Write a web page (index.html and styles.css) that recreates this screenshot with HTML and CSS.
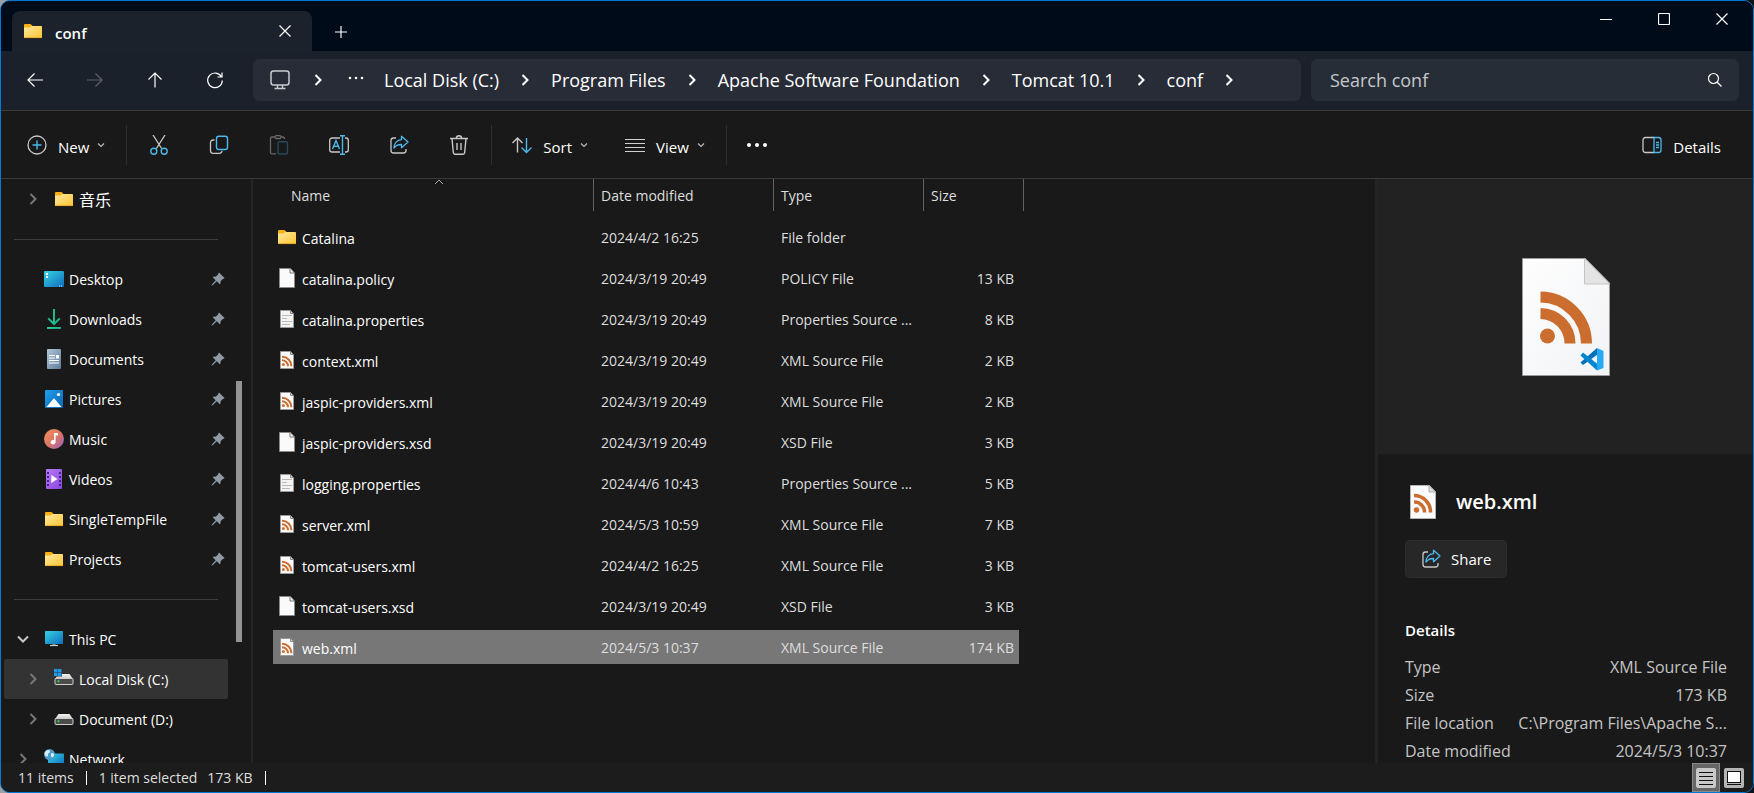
FILE: index.html
```html
<!DOCTYPE html>
<html lang="en">
<head>
<meta charset="UTF-8">
<title>conf</title>
<meta name="viewport" content="width=device-width, initial-scale=1">
<link rel="stylesheet" href="styles.css">
</head>
<body>

    <!-- Icon sprites -->
    <svg class="sprites" aria-hidden="true">
        <defs>
            <linearGradient id="g-folder" x1="0" y1="0" x2="1" y2="1"><stop offset="0" stop-color="#ffe9a2"/><stop offset="1" stop-color="#fdc430"/></linearGradient>
            <linearGradient id="g-screen" x1="0" y1="0" x2="1" y2="1"><stop offset="0" stop-color="#35d3e3"/><stop offset="1" stop-color="#0f6cbd"/></linearGradient>
            <linearGradient id="g-down" x1="0" y1="0" x2="1" y2="1"><stop offset="0" stop-color="#3fd684"/><stop offset="1" stop-color="#0d9c96"/></linearGradient>
            <linearGradient id="g-doc" x1="0" y1="0" x2="1" y2="1"><stop offset="0" stop-color="#b4c6d8"/><stop offset="1" stop-color="#5f7c9b"/></linearGradient>
            <linearGradient id="g-pic" x1="0" y1="0" x2="1" y2="1"><stop offset="0" stop-color="#1ea0e8"/><stop offset="1" stop-color="#0a64b8"/></linearGradient>
            <linearGradient id="g-music" x1="0" y1="0" x2="1" y2="1"><stop offset="0" stop-color="#f4915a"/><stop offset=".5" stop-color="#dd7766"/><stop offset="1" stop-color="#9b5cba"/></linearGradient>
            <linearGradient id="g-video" x1="0" y1="0" x2="1" y2="1"><stop offset="0" stop-color="#b67cf2"/><stop offset="1" stop-color="#8a45e0"/></linearGradient>
            <linearGradient id="g-page" x1="0" y1="0" x2="1" y2="1"><stop offset="0" stop-color="#fefefe"/><stop offset="1" stop-color="#f1f3f6"/></linearGradient>
            <linearGradient id="g-drive" x1="0" y1="0" x2="0" y2="1"><stop offset="0" stop-color="#f4f4f4"/><stop offset="1" stop-color="#c8c8c8"/></linearGradient>
        </defs>
        <symbol id="i-folder" viewBox="0 0 20 20">
            <path d="M1 4.500C1 3.600 1.400 3 2 3h5.400l2 1.800V8H1z" fill="#f9b115"/>
            <path d="M1 6.500h5.600L8.400 5H18c.6 0 1 .4 1 1v10.400c0 .4-.3.6-.6.6H1.600c-.3 0-.6-.2-.6-.6z" fill="url(#g-folder)"/>
            <path d="M1.200 16.600h17.600" stroke="#e0a21c" stroke-width=".8"/>
        </symbol>
        <symbol id="i-desktop" viewBox="0 0 20 20">
            <rect x="0" y="2" width="20" height="16" rx="1" fill="url(#g-screen)"/>
            <path d="M2 4h2v2H2zM2 7h2v2H2z" fill="#fff"/>
            <path d="M15 17h1M17 17h1" stroke="#cfe8ff"/>
        </symbol>
        <symbol id="i-downloads" viewBox="0 0 20 20">
            <path d="M10 0v14M4.200 9.400L10 15l5.800-5.600" fill="none" stroke="#20b98c" stroke-width="2"/>
            <rect x="3" y="18" width="14" height="2" fill="url(#g-down)"/>
        </symbol>
        <symbol id="i-documents" viewBox="0 0 20 20">
            <rect x="3" y="0" width="14" height="20" rx="1" fill="url(#g-doc)"/>
            <path d="M5 6.500h6M5 9h6M5 11.500h10M5 14h10" stroke="#fff" stroke-width="1.200"/>
            <rect x="12" y="6" width="3" height="3.500" fill="#fff"/>
        </symbol>
        <symbol id="i-pictures" viewBox="0 0 20 20">
            <rect x="1" y="1" width="18" height="18" rx="1" fill="url(#g-pic)"/>
            <path d="M2.500 18l7-8.200c.3-.3.700-.3 1 0l7 8.200z" fill="#fff"/>
            <circle cx="14.500" cy="5.500" r="1.600" fill="#fff"/>
        </symbol>
        <symbol id="i-music" viewBox="0 0 20 20">
            <circle cx="10" cy="10" r="10" fill="url(#g-music)"/>
            <circle cx="9" cy="13.300" r="2.300" fill="#fff"/>
            <path d="M10 4h4v2.500h-2.400v7H10z" fill="#fff"/>
        </symbol>
        <symbol id="i-videos" viewBox="0 0 20 20">
            <rect x="2" y="0" width="16" height="20" rx="1" fill="url(#g-video)"/>
            <path d="M3 3h2v2H3zM3 7h2v2H3zM3 11h2v2H3zM3 15h2v2H3zM15 3h2v2h-2zM15 7h2v2h-2zM15 11h2v2h-2zM15 15h2v2h-2z" fill="#4b2182"/>
            <path d="M7.300 6v8l6.200-4z" fill="#fff"/>
        </symbol>
        <symbol id="i-pc" viewBox="0 0 20 20">
            <rect x="1" y="2" width="18" height="13" rx=".8" fill="url(#g-screen)"/>
            <path d="M8.500 15h3v1.500h-3z" fill="#7d8a96"/>
            <path d="M6 16.500h8" stroke="#c9d1d8" stroke-width="1.200"/>
        </symbol>
        <symbol id="i-drive" viewBox="0 0 20 20">
            <path d="M4.500 5h11L19 10H1z" fill="url(#g-drive)"/>
            <rect x="1" y="9.500" width="18" height="6" rx="1" fill="#4c4c4c" stroke="#cfcfcf" stroke-width="1"/>
            <circle cx="4.500" cy="12.200" r="1" fill="#3ee04a"/>
        </symbol>
        <symbol id="i-windrive" viewBox="0 0 20 20">
            <use href="#i-drive"/>
            <path d="M0 0h8v7.500H0z" fill="#333"/>
            <path d="M0 0h3.500v3.300H0zM4 0h3.500v3.300H4zM0 3.800h3.500v3.300H0zM4 3.800h3.500v3.300H4z" fill="#1c9cee"/>
        </symbol>
        <symbol id="i-network" viewBox="0 0 20 20">
            <rect x="4" y="4.500" width="16" height="12" rx=".8" fill="url(#g-screen)"/>
            <circle cx="5.500" cy="5.500" r="5.500" fill="#4c9fca"/>
            <path d="M2 2c2-2 4-1 4 .5S3.500 4 4 6s-2 2-3 0 0-3 1-4zM8 4c1.500 0 2.500 1 2 2.500S8 9 7.500 8s-1-4 .5-4z" fill="#d6edf8"/>
        </symbol>
        <symbol id="i-page" viewBox="0 0 20 20">
            <path d="M2.500.5h11L17.500 5v14.500h-15z" fill="#fafafa" stroke="#8a8a8a"/>
            <path d="M13 .5V5h4.500" fill="none" stroke="#777"/>
        </symbol>
        <symbol id="i-text" viewBox="0 0 20 20">
            <path d="M3.500 1.500h10L16.500 5v13.500h-13z" fill="#f4f4f4" stroke="#9a9a9a"/>
            <path d="M13.500 1.500V4.500h3" fill="none" stroke="#888"/>
            <path d="M5 6.500h10M5 9.500h5M5 12.500h10M5 15.500h8" stroke="#b9b9b9"/>
        </symbol>
        <symbol id="i-xml" viewBox="0 0 20 20">
            <path d="M3.500 1.500h10L16.500 5v13.500h-13z" fill="#fbfbfb" stroke="#9a9a9a"/>
            <path d="M13.500 1.500V4.500h3" fill="none" stroke="#888"/>
            <circle cx="6.400" cy="14.600" r="1.500" fill="#cb6d2e"/>
            <path d="M5 10.200a6 6 0 0 1 6 6M5 6.800a9.400 9.400 0 0 1 9.400 9.400" fill="none" stroke="#cb6d2e" stroke-width="2"/>
        </symbol>
        <symbol id="i-pin" viewBox="0 0 14 14">
            <path d="M8.300.8l5 5c.3.300.1.700-.2.800l-1.300.3-2.200 2.300-.2 2.500c0 .4-.5.6-.8.300L5.800 9.300 1.600 13.300l-1.100.3.300-1.200 3.900-4.200L2 5.600c-.3-.3-.1-.8.300-.8l2.700-.3 2.200-2.200.3-1.300c.1-.4.500-.5.800-.2z" fill="#8d9aa3"/>
        </symbol>
        <symbol id="i-right" viewBox="0 0 20 20"><path d="M7.500 5l5 5-5 5" fill="none" stroke="currentColor" stroke-width="2"/></symbol>
        <symbol id="i-open" viewBox="0 0 20 20"><path d="M5 7.500l5 5 5-5" fill="none" stroke="currentColor" stroke-width="2"/></symbol>
        <symbol id="i-small" viewBox="0 0 10 10"><path d="M2 3.500l3 3 3-3" fill="none" stroke="#b8b8b8" stroke-width="1.200"/></symbol>
        <symbol id="i-close" viewBox="0 0 12 12"><path d="M.500.500l11 11M11.500.500l-11 11" fill="none" stroke="currentColor" stroke-width="1.200"/></symbol>
        <symbol id="i-share" viewBox="0 0 20 20">
            <path d="M7 3H4.500A2.500 2.500 0 0 0 2 5.500v10A2.500 2.500 0 0 0 4.500 18h10a2.500 2.500 0 0 0 2.500-2.500V14" fill="none" stroke="#c8c8c8" stroke-width="1.300"/>
            <path d="M12.500 1.200L19 7l-6.500 5.800V9.500C9 9.300 7 10.300 5 13c.2-4.500 3-8 7.500-8.300z" fill="none" stroke="#4cb8ee" stroke-width="1.300" stroke-linejoin="round"/>
        </symbol>
    </svg>

    <div class="window">
        <header class="titlebar">
            <div class="tab">
                <svg class="icon"><use href="#i-folder"/></svg>
                <span class="tab-title">conf</span>
                <button class="tab-close" aria-label="Close tab"><svg class="icon-xs"><use href="#i-close"/></svg></button>
            </div>
            <button class="new-tab" aria-label="New tab"><svg class="icon-xs" viewBox="0 0 12 12"><path d="M6 0v12M0 6h12" stroke="currentColor" stroke-width="1.200"/></svg></button>
            <div class="window-buttons">
                <button aria-label="Minimize"><svg class="icon-xs" viewBox="0 0 12 12"><path d="M0 6.500h12" stroke="currentColor"/></svg></button>
                <button aria-label="Maximize"><svg class="icon-xs" viewBox="0 0 12 12"><rect x=".5" y=".5" width="11" height="11" rx="1" fill="none" stroke="currentColor" stroke-width="1.200"/></svg></button>
                <button aria-label="Close"><svg class="icon-xs"><use href="#i-close"/></svg></button>
            </div>
        </header>

        <nav class="navbar" aria-label="Navigation">
            <button aria-label="Back"><svg class="icon" viewBox="0 0 20 20"><path d="M18 10H3M9.500 3.500L3 10l6.500 6.500" fill="none" stroke="currentColor" stroke-width="1.200"/></svg></button>
            <button aria-label="Forward" disabled><svg class="icon" viewBox="0 0 20 20"><path d="M2 10h15M10.500 3.500L17 10l-6.500 6.500" fill="none" stroke="currentColor" stroke-width="1.200"/></svg></button>
            <button aria-label="Up"><svg class="icon" viewBox="0 0 20 20"><path d="M10 17.500V3M3.500 9.500L10 3l6.500 6.500" fill="none" stroke="currentColor" stroke-width="1.200"/></svg></button>
            <button aria-label="Refresh"><svg class="icon" viewBox="0 0 20 20"><path d="M16.500 7A7.300 7.300 0 1 0 17.300 10.500M17 2.500V7h-4.500" fill="none" stroke="currentColor" stroke-width="1.200"/></svg></button>
            <div class="address">
                <button aria-label="Computer"><svg class="icon" viewBox="0 0 20 20"><rect x="1" y="1" width="18" height="14" rx="2.500" fill="none" stroke="#c8cbd0" stroke-width="1.500"/><path d="M7.500 15v3M12.500 15v3M4.500 18.500h11" stroke="#c8cbd0" stroke-width="1.500"/></svg></button>
                <svg class="icon"><use href="#i-right"/></svg>
                <button aria-label="More"><svg class="icon" viewBox="0 0 20 20"><g fill="#fff"><circle cx="4" cy="8" r="1.300"/><circle cx="10" cy="8" r="1.300"/><circle cx="16" cy="8" r="1.300"/></g></svg></button>
                <a href="#">Local Disk (C:)</a>
                <svg class="icon"><use href="#i-right"/></svg>
                <a href="#">Program Files</a>
                <svg class="icon"><use href="#i-right"/></svg>
                <a href="#">Apache Software Foundation</a>
                <svg class="icon"><use href="#i-right"/></svg>
                <a href="#">Tomcat 10.1</a>
                <svg class="icon"><use href="#i-right"/></svg>
                <a href="#">conf</a>
                <svg class="icon"><use href="#i-right"/></svg>
            </div>
            <div class="search">
                <input type="text" placeholder="Search conf" aria-label="Search conf">
                <svg class="icon-s" viewBox="0 0 16 16"><circle cx="6.500" cy="6.500" r="5" fill="none" stroke="currentColor" stroke-width="1.200"/><path d="M10 10l4.500 4.500" stroke="currentColor" stroke-width="1.300"/></svg>
            </div>
        </nav>

        <div class="toolbar">
            <button class="tool">
                <svg class="icon" viewBox="0 0 20 20"><circle cx="10" cy="10" r="9" fill="none" stroke="#c8c8c8" stroke-width="1.300"/><path d="M10 5.500v9M5.500 10h9" stroke="#4cb8ee" stroke-width="1.400"/></svg>
                <span>New</span>
                <svg class="arrow"><use href="#i-small"/></svg>
            </button>
            <span class="separator"></span>
            <button class="tool tool-icon" aria-label="Cut"><svg class="icon" viewBox="0 0 20 20"><path d="M4 0l8.600 13.500M16 0L7.400 13.500" stroke="#c8c8c8" stroke-width="1.300"/><g fill="none" stroke="#4cb8ee" stroke-width="1.400"><circle cx="4.800" cy="16.300" r="3"/><circle cx="15.200" cy="16.300" r="3"/></g></svg></button>
            <button class="tool tool-icon" aria-label="Copy"><svg class="icon" viewBox="0 0 20 20"><path d="M5.500 5H4a2.500 2.500 0 0 0-2.500 2.500v8.300A2.500 2.500 0 0 0 4 18.300h6.500a2.500 2.500 0 0 0 2.500-2.500" fill="none" stroke="#c8c8c8" stroke-width="1.300"/><rect x="7.500" y="1.200" width="11" height="13.300" rx="2.300" fill="none" stroke="#4cb8ee" stroke-width="1.400"/></svg></button>
            <button class="tool tool-icon" aria-label="Paste" disabled><svg class="icon" viewBox="0 0 20 20"><path d="M7 18.800H3A1.500 1.500 0 0 1 1.500 17.300V3.500A1.500 1.500 0 0 1 3 2h3M12 2h2a1.500 1.500 0 0 1 1.500 1.500V4" fill="none" stroke="#686868" stroke-width="1.300"/><rect x="6" y=".7" width="6" height="2.800" rx="1.300" fill="none" stroke="#686868" stroke-width="1.300"/><rect x="9" y="6.700" width="9.500" height="12.300" rx="1.500" fill="none" stroke="#27495a" stroke-width="1.400"/></svg></button>
            <button class="tool tool-icon" aria-label="Rename"><svg class="icon" viewBox="0 0 20 20"><path d="M11 3H3A2.300 2.300 0 0 0 .7 5.300v9.400A2.300 2.300 0 0 0 3 17h8M16 3h1a2.300 2.300 0 0 1 2.300 2.300v9.400A2.300 2.300 0 0 1 17 17h-1" fill="none" stroke="#c8c8c8" stroke-width="1.300"/><path d="M3.500 14L7 5.500l3.500 8.500M4.700 11.200h4.600M13.500.5v19M11 .7h5M11 19.300h5" fill="none" stroke="#4cb8ee" stroke-width="1.400"/></svg></button>
            <button class="tool tool-icon" aria-label="Share"><svg class="icon"><use href="#i-share"/></svg></button>
            <button class="tool tool-icon" aria-label="Delete"><svg class="icon" viewBox="0 0 20 20"><path d="M1 3.500h18M3 3.500l1.300 14c.1 1 .8 1.700 1.700 1.700h8c.9 0 1.600-.7 1.700-1.700l1.300-14M7.300 3.200C7.500 0 12.500 0 12.700 3.200M8 8v7M12 8v7" fill="none" stroke="#c8c8c8" stroke-width="1.400"/></svg></button>
            <span class="separator"></span>
            <button class="tool">
                <svg class="icon" viewBox="0 0 20 20"><path d="M5.500 17.500V3M.5 8l5-5 5 5" fill="none" stroke="#c8c8c8" stroke-width="1.400"/><path d="M14.500 3v14.500M9.500 12.500l5 5 5-5" fill="none" stroke="#4cb8ee" stroke-width="1.400"/></svg>
                <span>Sort</span>
                <svg class="arrow"><use href="#i-small"/></svg>
            </button>
            <button class="tool">
                <svg class="icon" viewBox="0 0 20 20"><path d="M0 4.500h20M0 8.500h20M0 12.500h20M0 16.500h20" stroke="#d0d0d0" stroke-width="1.200"/></svg>
                <span>View</span>
                <svg class="arrow"><use href="#i-small"/></svg>
            </button>
            <span class="separator"></span>
            <button class="tool" aria-label="See more"><svg class="icon" viewBox="0 0 20 20"><g fill="#fff"><circle cx="2" cy="10" r="2"/><circle cx="10" cy="10" r="2"/><circle cx="18" cy="10" r="2"/></g></svg></button>
            <button class="tool details-toggle">
                <svg class="icon" viewBox="0 0 20 20"><path d="M12 2.500H3.500A2.500 2.500 0 0 0 1 5v10a2.500 2.500 0 0 0 2.500 2.500H12" fill="none" stroke="#c8c8c8" stroke-width="1.300"/><path d="M12 2.500h4.500A2.500 2.500 0 0 1 19 5v10a2.500 2.500 0 0 1-2.500 2.500H12zM14 7.500h3M14 10h3M14 12.500h3" fill="none" stroke="#4cb8ee" stroke-width="1.300"/></svg>
                <span>Details</span>
            </button>
        </div>

        <main class="content">
            <aside class="sidebar">
                <a class="place child" href="#"><svg class="icon twist"><use href="#i-right"/></svg><svg class="icon"><use href="#i-folder"/></svg><span class="cjk" lang="zh">音乐</span></a>
                <hr>
                <a class="place" href="#"><svg class="icon"><use href="#i-desktop"/></svg><span>Desktop</span><svg class="pin"><use href="#i-pin"/></svg></a>
                <a class="place" href="#"><svg class="icon"><use href="#i-downloads"/></svg><span>Downloads</span><svg class="pin"><use href="#i-pin"/></svg></a>
                <a class="place" href="#"><svg class="icon"><use href="#i-documents"/></svg><span>Documents</span><svg class="pin"><use href="#i-pin"/></svg></a>
                <a class="place" href="#"><svg class="icon"><use href="#i-pictures"/></svg><span>Pictures</span><svg class="pin"><use href="#i-pin"/></svg></a>
                <a class="place" href="#"><svg class="icon"><use href="#i-music"/></svg><span>Music</span><svg class="pin"><use href="#i-pin"/></svg></a>
                <a class="place" href="#"><svg class="icon"><use href="#i-videos"/></svg><span>Videos</span><svg class="pin"><use href="#i-pin"/></svg></a>
                <a class="place" href="#"><svg class="icon"><use href="#i-folder"/></svg><span>SingleTempFile</span><svg class="pin"><use href="#i-pin"/></svg></a>
                <a class="place" href="#"><svg class="icon"><use href="#i-folder"/></svg><span>Projects</span><svg class="pin"><use href="#i-pin"/></svg></a>
                <hr>
                <a class="place root open" href="#"><svg class="icon twist"><use href="#i-open"/></svg><svg class="icon"><use href="#i-pc"/></svg><span>This PC</span></a>
                <a class="place child active" href="#"><svg class="icon twist"><use href="#i-right"/></svg><svg class="icon"><use href="#i-windrive"/></svg><span>Local Disk (C:)</span></a>
                <a class="place child" href="#"><svg class="icon twist"><use href="#i-right"/></svg><svg class="icon"><use href="#i-drive"/></svg><span>Document (D:)</span></a>
                <a class="place root" href="#"><svg class="icon twist"><use href="#i-right"/></svg><svg class="icon"><use href="#i-network"/></svg><span>Network</span></a>
                <div class="scrollbar"></div>
            </aside>

            <section class="files">
                <table>
                    <colgroup><col class="col-name"><col class="col-date"><col class="col-type"><col class="col-size"></colgroup>
                    <thead>
                        <tr>
                            <th aria-sort="ascending"><button>Name</button><svg class="sort-mark" viewBox="0 0 10 6"><path d="M1 5l4-4 4 4" fill="none" stroke="#aaa"/></svg></th>
                            <th><button>Date modified</button></th>
                            <th><button>Type</button></th>
                            <th><button>Size</button></th>
                        </tr>
                    </thead>
                    <tbody>
                        <tr><td><svg class="icon"><use href="#i-folder"/></svg>Catalina</td><td>2024/4/2 16:25</td><td>File folder</td><td></td></tr>
                        <tr><td><svg class="icon"><use href="#i-page"/></svg>catalina.policy</td><td>2024/3/19 20:49</td><td>POLICY File</td><td>13 KB</td></tr>
                        <tr><td><svg class="icon"><use href="#i-text"/></svg>catalina.properties</td><td>2024/3/19 20:49</td><td>Properties Source ...</td><td>8 KB</td></tr>
                        <tr><td><svg class="icon"><use href="#i-xml"/></svg>context.xml</td><td>2024/3/19 20:49</td><td>XML Source File</td><td>2 KB</td></tr>
                        <tr><td><svg class="icon"><use href="#i-xml"/></svg>jaspic-providers.xml</td><td>2024/3/19 20:49</td><td>XML Source File</td><td>2 KB</td></tr>
                        <tr><td><svg class="icon"><use href="#i-page"/></svg>jaspic-providers.xsd</td><td>2024/3/19 20:49</td><td>XSD File</td><td>3 KB</td></tr>
                        <tr><td><svg class="icon"><use href="#i-text"/></svg>logging.properties</td><td>2024/4/6 10:43</td><td>Properties Source ...</td><td>5 KB</td></tr>
                        <tr><td><svg class="icon"><use href="#i-xml"/></svg>server.xml</td><td>2024/5/3 10:59</td><td>XML Source File</td><td>7 KB</td></tr>
                        <tr><td><svg class="icon"><use href="#i-xml"/></svg>tomcat-users.xml</td><td>2024/4/2 16:25</td><td>XML Source File</td><td>3 KB</td></tr>
                        <tr><td><svg class="icon"><use href="#i-page"/></svg>tomcat-users.xsd</td><td>2024/3/19 20:49</td><td>XSD File</td><td>3 KB</td></tr>
                        <tr class="selected"><td><svg class="icon"><use href="#i-xml"/></svg>web.xml</td><td>2024/5/3 10:37</td><td>XML Source File</td><td>174 KB</td></tr>
                    </tbody>
                </table>
            </section>

            <aside class="details">
                <div class="preview">
                    <svg class="preview-icon" viewBox="0 0 88 118">
                        <path d="M.5.5h63L87.500 25v92.500H.5z" fill="url(#g-page)" stroke="#9a9a9a"/>
                        <path d="M62.500.5V26h25z" fill="#e4e4e4" stroke="#c4c4c4"/>
                        <circle cx="25.500" cy="78" r="7.500" fill="#cb6d2e"/>
                        <path d="M18.500 55.500a30 30 0 0 1 29.500 30M18.500 39a46.500 46.500 0 0 1 46 46.500" fill="none" stroke="#cb6d2e" stroke-width="11"/>
                        <path d="M75 90L58.500 104.500l2.500 2.500 14.500-10.500z" fill="#0070b8"/>
                        <path d="M75 112.500L58.500 97.500l2.500-3 14.500 11.500z" fill="#0085d0"/>
                        <path d="M75 90l6.500 3v17l-6.500 2.500z" fill="#27a9f5"/>
                    </svg>
                </div>
                <div class="info">
                    <div class="file-title">
                        <svg class="title-icon" viewBox="0 0 26 34">
                            <path d="M.5.500h19L25.500 7v26.500H.5z" fill="#fbfbfb" stroke="#b4b4b4"/>
                            <path d="M19 .5V7h6.500z" fill="#ddd" stroke="#aaa"/>
                            <circle cx="6.500" cy="25" r="2.700" fill="#cb6d2e"/>
                            <path d="M4 17a10 10 0 0 1 10.500 10.500M4 10.500A16.500 16.500 0 0 1 20.500 27.500" fill="none" stroke="#cb6d2e" stroke-width="3.500"/>
                        </svg>
                        <h1>web.xml</h1>
                    </div>
                    <button class="share"><svg class="icon"><use href="#i-share"/></svg><span>Share</span></button>
                    <h2>Details</h2>
                    <dl>
                        <div><dt>Type</dt><dd>XML Source File</dd></div>
                        <div><dt>Size</dt><dd>173 KB</dd></div>
                        <div><dt>File location</dt><dd>C:\Program Files\Apache S...</dd></div>
                        <div><dt>Date modified</dt><dd>2024/5/3 10:37</dd></div>
                    </dl>
                </div>
            </aside>
        </main>

        <footer class="statusbar">
            <span>11 items</span>
            <i></i>
            <span>1 item selected</span>
            <span class="size">173 KB</span>
            <i></i>
            <div class="view-buttons">
                <button class="on" aria-label="Details view"><svg class="icon" viewBox="0 0 20 20"><rect width="20" height="20" rx="2" fill="#c8c8c8"/><path d="M3 4.500h14M3 8.500h14M3 12.500h14M3 16.500h14" stroke="#111"/></svg></button>
                <button aria-label="Large icons"><svg class="icon" viewBox="0 0 20 20"><rect width="20" height="20" rx="2" fill="#b4b4b4"/><rect x="3.500" y="3.500" width="13" height="11" fill="#fff" stroke="#111"/><path d="M3 16.500h14" stroke="#111"/></svg></button>
            </div>
        </footer>
    </div>

</body>
</html>
```

FILE: styles.css
```css
* {
    box-sizing: border-box;
}

body {
    margin: 0;
    background: linear-gradient(90deg, #9aa0a6, #101010 50%);
    color: #fff;
    font-family: 'Open Sans', 'Noto Sans', 'Noto Sans CJK SC', sans-serif;
    font-size: 14px;
    line-height: 20px;
    overflow: hidden;
}

button {
    padding: 0;
    border: none;
    background: none;
    color: inherit;
    font: inherit;
    display: flex;
    align-items: center;
    justify-content: center;
}

a {
    color: inherit;
    text-decoration: none;
}

svg {
    display: block;
    flex: none;
}

.sprites {
    position: absolute;
    width: 0;
    height: 0;
}

.icon {
    width: 20px;
    height: 20px;
}

.icon-s {
    width: 16px;
    height: 16px;
}

.icon-xs {
    width: 12px;
    height: 12px;
}

.window {
    display: flex;
    flex-direction: column;
    height: 100vh;
    border: 1px solid #0078d4;
    border-radius: 10px;
    background-color: #191919;
    overflow: hidden;
}

/* Title bar */
.titlebar {
    display: flex;
    height: 50px;
    background-color: #000b1a;
}

.tab {
    display: flex;
    align-items: center;
    gap: 12px;
    width: 300px;
    margin: 10px 0 0 11px;
    padding: 0 17px 0 11px;
    border-radius: 8px 8px 0 0;
    background-color: #1c222c;
}

.tab-title {
    padding-top: 3px;
    font-size: 15px;
    font-weight: 600;
}

.tab-close {
    width: 20px;
    height: 20px;
    margin-left: auto;
}

.new-tab {
    width: 58px;
    padding-top: 12px;
}

.window-buttons {
    display: flex;
    height: 36px;
    margin: 0 2px 0 auto;
}

.window-buttons button {
    width: 58px;
}

/* Navigation row */
.navbar {
    display: flex;
    align-items: center;
    height: 60px;
    padding: 0 14px 2px;
    border-bottom: 1px solid #3a3a3a;
    background-color: #1b212b;
}

.navbar > button {
    width: 40px;
    height: 40px;
    margin-right: 20px;
}

.navbar > button:disabled {
    color: #5d626b;
}

.address {
    display: flex;
    flex: 1;
    align-items: center;
    gap: 16px;
    height: 42px;
    margin: 0 10px 0 -2px;
    padding-left: 15px;
    border-radius: 6px;
    background-color: #282c37;
    font-size: 18px;
    line-height: 24px;
    white-space: nowrap;
    overflow: hidden;
}

.address button {
    width: 24px;
}

.search {
    display: flex;
    align-items: center;
    width: 428px;
    height: 42px;
    padding: 0 16px 0 19px;
    border-radius: 6px;
    background-color: #272d36;
}

.search input {
    flex: 1;
    min-width: 0;
    padding: 0;
    border: none;
    outline: none;
    background: none;
    color: #fff;
    font: inherit;
    font-size: 18px;
}

.search input::placeholder {
    color: #c5c8cc;
}

/* Toolbar */
.toolbar {
    display: flex;
    align-items: center;
    height: 68px;
    padding: 0 16px 0 8px;
    border-bottom: 1px solid #3a3a3a;
    font-size: 15px;
}

.tool {
    height: 40px;
    padding: 0 18px;
}

.tool span {
    margin: 4px 7px 0 11px;
}

.tool-icon {
    width: 60px;
}

.arrow {
    width: 10px;
    height: 10px;
}

.separator {
    width: 1px;
    height: 40px;
    margin: 0 2px;
    background-color: #2e2e2e;
}

.details-toggle {
    margin-left: auto;
    padding-right: 9px;
}

/* Main area */
.content {
    display: flex;
    flex: 1;
    min-height: 0;
}

.sidebar {
    position: relative;
    width: 252px;
    border-right: 2px solid #262626;
    overflow: hidden;
}

.sidebar hr {
    height: 1px;
    margin: 20px 33px 19px 13px;
    border: none;
    background-color: #3c3c3c;
}

.place {
    display: flex;
    align-items: center;
    gap: 5px;
    height: 40px;
    margin: 0 23px 0 3px;
    padding-left: 40px;
    border-radius: 2px;
}

.place span {
    padding-top: 2px;
}

.place.root {
    padding-left: 9px;
}

.place.child {
    padding-left: 19px;
}

.place.active {
    background-color: #333;
}

.twist {
    color: #777;
    margin-right: 6px;
}

.open .twist {
    color: #c8c8c8;
}

.cjk {
    font-size: 16px;
}

.pin {
    width: 14px;
    height: 14px;
    margin: 0 3px 0 auto;
}

.scrollbar {
    position: absolute;
    top: 202px;
    right: 9px;
    width: 6px;
    height: 261px;
    background-color: #949494;
}

/* File list */
.files {
    flex: 1;
    min-width: 0;
    padding-left: 20px;
    overflow: hidden;
}

table {
    width: 751px;
    table-layout: fixed;
    border-spacing: 0;
    white-space: nowrap;
}

.col-name {
    width: 321px;
}

.col-date {
    width: 180px;
}

.col-type {
    width: 150px;
}

.col-size {
    width: 100px;
}

th {
    position: relative;
    padding: 0 0 6px;
    color: #dedede;
    font-weight: 400;
}

th button {
    width: 100%;
    height: 32px;
    padding: 2px 0 0 7px;
    border-right: 1px solid #636363;
    justify-content: flex-start;
}

th:first-child button {
    padding-left: 18px;
}

.sort-mark {
    position: absolute;
    top: 0;
    left: 50%;
    width: 10px;
    height: 6px;
}

td {
    height: 41px;
    padding: 1px 0 0 7px;
    border-top: 3px solid transparent;
    border-bottom: 4px solid transparent;
    background-clip: padding-box;
    color: #dedede;
}

td:first-child {
    padding-left: 4px;
    color: #fff;
}

td:last-child {
    padding-right: 5px;
    border-right: 5px solid transparent;
    text-align: right;
}

td .icon {
    display: inline-block;
    margin-right: 5px;
    vertical-align: -3px;
}

.selected td {
    background-color: #777;
}

/* Details pane */
.details {
    width: 378px;
    border-left: 3px solid #242424;
    font-size: 15px;
}

.preview {
    display: flex;
    align-items: center;
    justify-content: center;
    height: 275px;
    background-color: #222;
}

.preview-icon {
    width: 88px;
    height: 118px;
}

.info {
    padding: 31px 26px 0 27px;
}

.file-title {
    display: flex;
    align-items: center;
    gap: 20px;
    padding-left: 5px;
}

.title-icon {
    width: 26px;
    height: 34px;
}

h1 {
    margin: 0;
    font-size: 20px;
    line-height: 34px;
    font-weight: 600;
}

.share {
    gap: 10px;
    height: 38px;
    margin-top: 21px;
    padding: 0 15px;
    border: 1px solid #2d2d2d;
    border-radius: 5px;
    background-color: #272727;
}

h2 {
    margin: 42px 0 13px;
    font-size: 15px;
    line-height: 20px;
    font-weight: 600;
}

dl {
    margin: 0;
    color: #c4c4c4;
    font-size: 16px;
}

dl div {
    display: flex;
    justify-content: space-between;
    line-height: 28px;
    white-space: nowrap;
}

dd {
    margin: 0;
}

/* Status bar */
.statusbar {
    position: relative;
    display: flex;
    align-items: center;
    height: 29px;
    padding: 0 5px 0 17px;
    background-color: #1c1c1c;
    color: #dedede;
}

.statusbar i {
    width: 1px;
    height: 14px;
    margin: 0 12px;
    background-color: #fff;
}

.size {
    margin-left: 10px;
}

.view-buttons {
    display: flex;
    margin-left: auto;
}

.view-buttons button {
    width: 28px;
    height: 29px;
}

.view-buttons .on {
    border: 1px solid #8a8a8a;
    background-color: #666;
}
```
